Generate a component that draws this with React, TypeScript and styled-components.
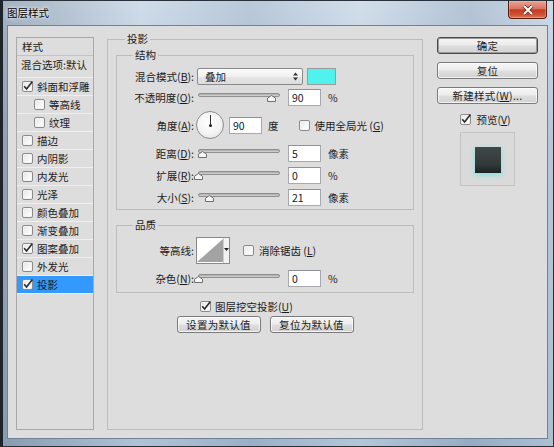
import React from 'react';
import styled, { createGlobalStyle } from 'styled-components';

const GlobalStyle = createGlobalStyle`
  html, body {
    margin: 0;
    padding: 0;
    background: #ffffff;
  }
  body {
    font-family: "Noto Sans CJK SC", "Liberation Sans", sans-serif;
    font-size: 10.5px;
    color: #1b1b1b;
  }
  * {
    box-sizing: border-box;
  }
`;

type ListEntry = { name: string; checked?: boolean; sub?: boolean; selected?: boolean };

const effects: ListEntry[] = [
  { name: '斜面和浮雕', checked: true },
  { name: '等高线', sub: true },
  { name: '纹理', sub: true },
  { name: '描边' },
  { name: '内阴影' },
  { name: '内发光' },
  { name: '光泽' },
  { name: '颜色叠加' },
  { name: '渐变叠加' },
  { name: '图案叠加', checked: true },
  { name: '外发光' },
  { name: '投影', checked: true, selected: true },
];

const Checkbox = ({ checked }: { checked?: boolean }) => (
  <CheckBoxFrame>
    {checked && (
      <CheckMark width="12" height="12" viewBox="0 0 12 12">
        <path d="M2.2 6.2 L4.6 9 L10.4 1.6" fill="none" stroke="#2a2a2a" strokeWidth="1.6" />
      </CheckMark>
    )}
  </CheckBoxFrame>
);

const Slider = ({ value }: { value: number }) => (
  <SliderBox>
    <SliderTrack />
    <SliderThumb
      width="9"
      height="7"
      viewBox="0 0 9 7"
      style={{ left: `${value * 82 - 4.5}px` }}
    >
      <polygon points="0.5,6.5 0.5,3.2 4.5,0.5 8.5,3.2 8.5,6.5" fill="#f6f6f6" stroke="#6e6e6e" />
    </SliderThumb>
  </SliderBox>
);

export default function App() {
  return (
    <>
      <GlobalStyle />
      <Window>
        <TitleBar>
          <Title>图层样式</Title>
          <CloseButton>
            <svg width="12" height="10" viewBox="0 0 12 10">
              <path d="M2 1 L10 9 M10 1 L2 9" stroke="#5a2016" strokeWidth="3.4" />
              <path d="M2 1 L10 9 M10 1 L2 9" stroke="#ffffff" strokeWidth="2" />
            </svg>
          </CloseButton>
        </TitleBar>

        <Client>
          <StyleList>
            <ListHeader>样式</ListHeader>
            <BlendRow>混合选项:默认</BlendRow>
            {effects.map((e) => (
              <ListItem key={e.name} $sub={e.sub} $selected={e.selected}>
                <Checkbox checked={e.checked} />
                <span>{e.name}</span>
              </ListItem>
            ))}
          </StyleList>

          <MainGroup>
            <MainLegend>投影</MainLegend>

            <SubGroup>
              <SubLegend>结构</SubLegend>
              <FieldRow $h={17}>
                <FieldLabel>混合模式(<u>B</u>):</FieldLabel>
                <SelectBox>
                  <span>叠加</span>
                  <svg width="5" height="9" viewBox="0 0 5 9">
                    <path d="M0 3.5 L2.5 0.5 L5 3.5 Z M0 5.5 L2.5 8.5 L5 5.5 Z" fill="#333" />
                  </svg>
                </SelectBox>
                <Swatch />
              </FieldRow>

              <FieldRow $h={17}>
                <FieldLabel>不透明度(<u>O</u>):</FieldLabel>
                <Slider value={0.9} />
                <NumberBox readOnly value="90" />
                <Unit>%</Unit>
              </FieldRow>

              <FieldRow $h={30}>
                <FieldLabel>角度(<u>A</u>):</FieldLabel>
                <Dial>
                  <DialHand />
                </Dial>
                <NumberBox readOnly value="90" $ml={5} />
                <Unit $ml={6}>度</Unit>
                <CheckText $ml={20}>
                  <Checkbox />
                  <span>使用全局光 (<u>G</u>)</span>
                </CheckText>
              </FieldRow>

              <FieldRow $h={18}>
                <FieldLabel>距离(<u>D</u>):</FieldLabel>
                <Slider value={0.06} />
                <NumberBox readOnly value="5" />
                <Unit>像素</Unit>
              </FieldRow>

              <FieldRow $h={18}>
                <FieldLabel>扩展(<u>R</u>):</FieldLabel>
                <Slider value={0} />
                <NumberBox readOnly value="0" />
                <Unit>%</Unit>
              </FieldRow>

              <FieldRow $h={18}>
                <FieldLabel>大小(<u>S</u>):</FieldLabel>
                <Slider value={0.146} />
                <NumberBox readOnly value="21" />
                <Unit>像素</Unit>
              </FieldRow>
            </SubGroup>

            <QualityGroup>
              <SubLegend>品质</SubLegend>
              <FieldRow $h={27}>
                <FieldLabel>等高线:</FieldLabel>
                <ContourBox>
                  <ContourCurve width="28" height="25" viewBox="0 0 28 25">
                    <polygon points="0,25 28,0 28,25" fill="#a3a3a3" />
                  </ContourCurve>
                  <ContourArrow>
                    <svg width="5" height="3" viewBox="0 0 5 3">
                      <path d="M0 0 L5 0 L2.5 3 Z" fill="#222" />
                    </svg>
                  </ContourArrow>
                </ContourBox>
                <CheckText $ml={13}>
                  <Checkbox />
                  <span>消除锯齿 (<u>L</u>)</span>
                </CheckText>
              </FieldRow>

              <FieldRow $h={17}>
                <FieldLabel>杂色(<u>N</u>):</FieldLabel>
                <Slider value={0} />
                <NumberBox readOnly value="0" />
                <Unit>%</Unit>
              </FieldRow>
            </QualityGroup>

            <KnockoutRow>
              <Checkbox checked />
              <span>图层挖空投影(<u>U</u>)</span>
            </KnockoutRow>

            <DefaultButtons>
              <DialogButton $w={84}>设置为默认值</DialogButton>
              <DialogButton $w={84}>复位为默认值</DialogButton>
            </DefaultButtons>
          </MainGroup>

          <RightColumn>
            <DialogButton $default>确定</DialogButton>
            <DialogButton>复位</DialogButton>
            <DialogButton>新建样式(<u>W</u>)...</DialogButton>
            <PreviewToggle>
              <Checkbox checked />
              <span>预览(<u>V</u>)</span>
            </PreviewToggle>
            <PreviewBox>
              <PreviewSwatch />
            </PreviewBox>
          </RightColumn>
        </Client>
      </Window>
    </>
  );
}

const Window = styled.div`
  width: 554px;
  height: 447px;
  display: flex;
  flex-direction: column;
  border: 1px solid #27303b;
  border-left: 3px solid #1f242b;
  background:
    linear-gradient(90deg, rgba(60, 70, 85, 0.25) 0%, rgba(255, 255, 255, 0.15) 25%, rgba(90, 110, 140, 0.12) 45%, rgba(255, 255, 255, 0.2) 65%, rgba(80, 100, 130, 0.15) 85%, rgba(255, 255, 255, 0.1) 100%),
    linear-gradient(180deg, #c7d6e5 0%, #aec1d5 30%, #a3b8ce 100%);
`;

const TitleBar = styled.div`
  height: 24px;
  display: flex;
  align-items: flex-start;
  justify-content: space-between;
  padding-left: 4px;
`;

const Title = styled.div`
  margin-top: 4px;
  font-size: 10.5px;
  line-height: 15px;
  color: #000;
  text-shadow: 0 0 5px rgba(255, 255, 255, 0.95), 0 0 2px rgba(255, 255, 255, 0.9);
`;

const CloseButton = styled.div`
  width: 39px;
  height: 18px;
  margin-right: 6px;
  display: flex;
  align-items: center;
  justify-content: center;
  border: 1px solid #5d1c12;
  border-top: none;
  border-radius: 0 0 4px 4px;
  background: linear-gradient(180deg, #e7a493 0%, #d9745e 45%, #c23b20 52%, #cf5134 80%, #e07a5a 100%);
  box-shadow: inset 0 0 0 1px rgba(255, 200, 180, 0.35);
`;

const Client = styled.div`
  flex: 1;
  margin: 0 5px 7px 4px;
  display: flex;
  align-items: stretch;
  padding: 6px 8px 8px 8px;
  background: #dddddd;
  border: 1px solid #6f8299;
`;

const StyleList = styled.div`
  width: 78px;
  margin-top: 5px;
  display: flex;
  flex-direction: column;
  border: 1px solid #a9a9a9;
  background: #dddddd;
`;

const ListHeader = styled.div`
  height: 18px;
  padding-left: 5px;
  line-height: 17px;
  border-bottom: 1px solid #c3c3c3;
`;

const BlendRow = styled.div`
  height: 22px;
  padding: 1px 0 0 4px;
  line-height: 16px;
  border-bottom: 1px solid #efefef;
  white-space: nowrap;
`;

const ListItem = styled.div<{ $sub?: boolean; $selected?: boolean }>`
  height: 18px;
  display: flex;
  align-items: center;
  gap: 4px;
  padding-left: ${({ $sub }) => ($sub ? 17 : 5)}px;
  border-bottom: 1px solid #efefef;
  background: ${({ $selected }) => ($selected ? '#3399ff' : 'transparent')};
  white-space: nowrap;
`;

const CheckBoxFrame = styled.span`
  position: relative;
  flex: none;
  width: 11px;
  height: 11px;
  border: 1px solid #8b8b8b;
  border-radius: 2px;
  background: linear-gradient(135deg, #e4e4e4 0%, #f7f7f7 60%, #ffffff 100%);
  box-shadow: inset 0 0 0 1px #f4f4f4;
`;

const CheckMark = styled.svg`
  position: absolute;
  left: -1px;
  top: -2px;
`;

const MainGroup = styled.fieldset`
  width: 316px;
  min-width: 0;
  margin: 0 0 0 13px;
  padding: 0 8px 8px 8px;
  display: flex;
  flex-direction: column;
  border: 1px solid #bcbcbc;
`;

const MainLegend = styled.legend`
  margin-left: 9px;
  padding: 0 2px;
  line-height: 14px;
  font-size: 10.5px;
`;

const SubGroup = styled.fieldset`
  min-width: 0;
  margin: 2px 0 0 0;
  padding: 6px 0 3px 0;
  display: flex;
  flex-direction: column;
  gap: 4px;
  border: 1px solid #bcbcbc;
`;

const QualityGroup = styled(SubGroup)`
  margin-top: 8px;
  padding: 5px 0 5px 0;
  gap: 6px;
`;

const SubLegend = styled.legend`
  margin-left: 16px;
  padding: 0 2px;
  line-height: 14px;
  font-size: 10.5px;
`;

const FieldRow = styled.div<{ $h: number }>`
  height: ${({ $h }) => $h}px;
  display: flex;
  align-items: center;
  white-space: nowrap;
`;

const FieldLabel = styled.span`
  width: 77px;
  margin-right: 3px;
  text-align: right;
  flex: none;
`;

const SelectBox = styled.div`
  width: 106px;
  height: 17px;
  display: flex;
  align-items: center;
  justify-content: space-between;
  padding: 0 4px 0 7px;
  border: 1px solid #8a8a8a;
  border-radius: 2px;
  background: linear-gradient(180deg, #fbfbfb 0%, #f1f1f1 50%, #e6e6e6 51%, #dcdcdc 100%);
`;

const Swatch = styled.div`
  width: 29px;
  height: 17px;
  margin-left: 4px;
  border: 1px solid #9b9b9b;
  background: #4ff2ec;
`;

const SliderBox = styled.div`
  position: relative;
  width: 82px;
  height: 17px;
  margin-left: 1px;
  flex: none;
`;

const SliderTrack = styled.div`
  margin-top: 4px;
  height: 4px;
  border: 1px solid #8f8f8f;
  border-radius: 2px;
  background: linear-gradient(180deg, #a9a9a9 0%, #d6d6d6 100%);
`;

const SliderThumb = styled.svg`
  position: absolute;
  top: 6px;
`;

const NumberBox = styled.input<{ $ml?: number }>`
  width: 33px;
  height: 17px;
  margin-left: ${({ $ml }) => $ml ?? 8}px;
  padding: 0 0 0 3px;
  border: 1px solid #a7a9b0;
  border-top-color: #8e9097;
  background: #ffffff;
  font-family: "Noto Sans CJK SC", "Liberation Sans", sans-serif;
  font-size: 10.5px;
  color: #101828;
  outline: none;
  flex: none;
`;

const Unit = styled.span<{ $ml?: number }>`
  margin-left: ${({ $ml }) => $ml ?? 7}px;
`;

const Dial = styled.div`
  position: relative;
  width: 28px;
  height: 28px;
  margin-left: -1px;
  border: 1px solid #8c8c8c;
  border-radius: 50%;
  background: radial-gradient(circle at 45% 40%, #ffffff 0%, #f3f3f3 55%, #dedede 100%);
  flex: none;
`;

const DialHand = styled.div`
  position: absolute;
  left: 12.5px;
  top: 3px;
  width: 1px;
  height: 10px;
  background: #333;

  &::after {
    content: '';
    position: absolute;
    left: -1px;
    bottom: -2px;
    width: 3px;
    height: 3px;
    border-radius: 50%;
    background: #222;
  }
`;

const CheckText = styled.span<{ $ml?: number }>`
  display: flex;
  align-items: center;
  gap: 5px;
  margin-left: ${({ $ml }) => $ml ?? 0}px;
`;

const ContourBox = styled.div`
  width: 34px;
  height: 27px;
  margin-left: -1px;
  display: flex;
  border: 1px solid #8a8a8a;
  background: #ffffff;
  flex: none;
`;

const ContourCurve = styled.svg`
  display: block;
`;

const ContourArrow = styled.div`
  flex: 1;
  display: flex;
  align-items: center;
  justify-content: center;
  padding-bottom: 2px;
  border-left: 1px solid #cfcfcf;
  background: #f2f2f2;
`;

const KnockoutRow = styled.div`
  height: 14px;
  margin: 6px 0 0 84px;
  display: flex;
  align-items: center;
  gap: 4px;
  white-space: nowrap;
`;

const DefaultButtons = styled.div`
  margin-top: 3px;
  display: flex;
  justify-content: center;
  gap: 9px;
`;

const DialogButton = styled.div<{ $default?: boolean; $w?: number }>`
  width: ${({ $w }) => ($w ? `${$w}px` : '100%')};
  height: 17px;
  display: flex;
  align-items: center;
  justify-content: center;
  border: 1px solid ${({ $default }) => ($default ? '#4a4a4a' : '#7a7a7a')};
  border-radius: 3px;
  background: linear-gradient(180deg, #f6f6f6 0%, #ececec 48%, #dedede 52%, #d2d2d2 100%);
  box-shadow: inset 0 0 0 1px ${({ $default }) => ($default ? '#9a9a9a' : 'rgba(255, 255, 255, 0.7)')};
  white-space: nowrap;
  letter-spacing: 0.3px;
`;

const RightColumn = styled.div`
  width: 101px;
  margin: 5px 0 0 14px;
  align-self: flex-start;
  display: flex;
  flex-direction: column;
  align-items: center;
  gap: 8px;
`;

const PreviewToggle = styled.div`
  height: 14px;
  display: flex;
  align-items: center;
  gap: 5px;
  margin-left: -4px;
`;

const PreviewBox = styled.div`
  width: 55px;
  height: 54px;
  margin-top: -2px;
  display: flex;
  align-items: center;
  justify-content: center;
  padding-top: 1px;
  border: 1px solid #c3c3c3;
  background: #dadada;
`;

const PreviewSwatch = styled.div`
  width: 26px;
  height: 26px;
  background: linear-gradient(180deg, #3f4747 0%, #323a3a 65%, #1c2121 100%);
  box-shadow: 0 2px 4px 1px rgba(90, 235, 228, 0.55);
`;
